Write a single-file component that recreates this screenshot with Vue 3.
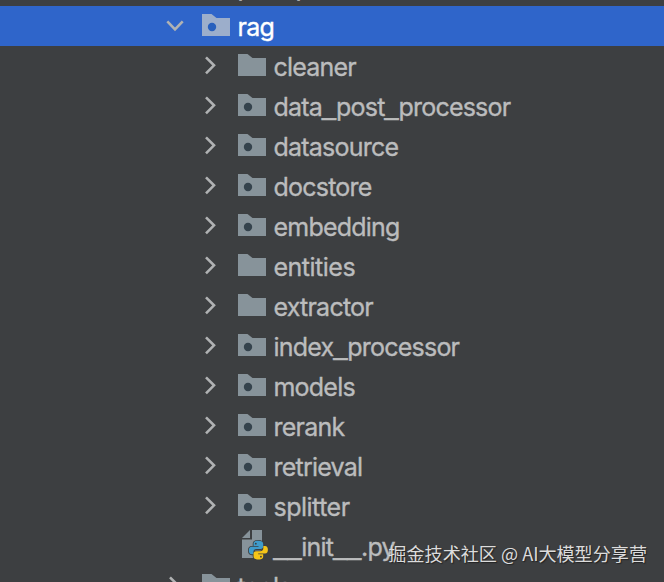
<template>
  <div class="project-panel">
    <ul class="tree">
      <li
        v-for="row in rows"
        :key="row.name"
        class="row"
        :class="['level-' + row.level, { selected: row.selected, loose: row.loose }]"
      >
        <!-- Arrow -->
        <span class="arrow">
          <svg v-if="row.open" class="chevron" viewBox="0 0 20 20">
            <path d="M2.3 5.4 L10 13.3 L17.7 5.4" />
          </svg>
          <svg v-else-if="row.type !== 'python'" class="chevron" viewBox="0 0 20 20">
            <path d="M5 1.3 L13 9.3 L5 17.3" />
          </svg>
        </span>

        <!-- Icon -->
        <svg v-if="row.type === 'python'" class="icon" viewBox="0 0 32 32">
          <path class="sheet" d="M14 0 H24 V28 H4 V9.5 H14 Z" />
          <path class="sheet" d="M4 8 L12 0 V8 Z" />
          <g transform="translate(10.4 10.2) scale(0.83)">
            <path class="outline" :d="snakeTop" />
            <path class="outline" :d="snakeTop" transform="rotate(180 12 12)" />
            <path class="snake-blue" :d="snakeTop" />
            <path class="snake-yellow" :d="snakeTop" transform="rotate(180 12 12)" />
            <circle class="eye" cx="8.9" cy="4.2" r="1.1" />
            <circle class="eye" cx="15.1" cy="19.8" r="1.1" />
          </g>
        </svg>
        <svg v-else class="icon" viewBox="0 0 32 32">
          <path class="folder" d="M0 4 H9.5 L14.5 8 H28 V26 H0 Z" />
          <circle v-if="row.type === 'package'" class="dot" cx="10" cy="17" r="4.2" />
        </svg>

        <span class="name">
          <span
            v-for="(part, index) in splitName(row.name)"
            :key="index"
            :class="{ underscore: part[0] === '_' }"
          >{{ part }}</span>
        </span>
      </li>
    </ul>
    <div class="watermark">掘金技术社区 @ AI大模型分享营</div>
  </div>
</template>

<script setup>
const snakeTop =
  'M11.8 0.8 C7.2 0.8 6.2 2.4 6.2 4.4 V7 H12.2 V8 H4 C1.5 8 0.5 10 0.5 12.5 C0.5 15.3 1.7 17 4 17 H6 V14.4 C6 12 7.7 10.7 9.9 10.7 H14.8 C16.7 10.7 17.8 9.2 17.8 7.6 V4.4 C17.8 2 15.7 0.8 11.8 0.8 Z'

const rows = [
  { name: 'prompt', level: 1, type: 'package' },
  { name: 'rag', level: 1, type: 'package', open: true, selected: true },
  { name: 'cleaner', level: 2, type: 'folder' },
  { name: 'data_post_processor', level: 2, type: 'package' },
  { name: 'datasource', level: 2, type: 'package' },
  { name: 'docstore', level: 2, type: 'package' },
  { name: 'embedding', level: 2, type: 'package' },
  { name: 'entities', level: 2, type: 'folder', loose: true },
  { name: 'extractor', level: 2, type: 'folder' },
  { name: 'index_processor', level: 2, type: 'package' },
  { name: 'models', level: 2, type: 'package' },
  { name: 'rerank', level: 2, type: 'package' },
  { name: 'retrieval', level: 2, type: 'package' },
  { name: 'splitter', level: 2, type: 'package', loose: true },
  { name: '__init__.py', level: 2, type: 'python' },
  { name: 'tools', level: 1, type: 'package' }
]

// underscores are wider than the letters, so they get their own span
const splitName = (name) => name.match(/_+|[^_]+/g)
</script>

<style>
body {
  background: #3d3f41;
}
</style>

<style scoped>
.project-panel {
  position: relative;
  height: 582px;
  overflow: hidden;
  background: #3d3f41;
  font-family: Inter, "Noto Sans CJK SC", sans-serif;
}

.tree {
  list-style: none;
  margin: -34px 0 0;
  padding: 0;
}

.row {
  display: flex;
  align-items: center;
  height: 40px;
  box-sizing: border-box;
  color: #bbbcbd;
}

.level-1 {
  padding-left: 165px;
}

.level-2 {
  padding-left: 201px;
}

.selected {
  background: #2f65ca;
  color: #fff;
}

.arrow {
  width: 20px;
  height: 20px;
  margin-right: 17px;
}

.chevron {
  display: block;
  width: 20px;
  height: 20px;
}

.chevron path {
  fill: none;
  stroke: #b0b2b3;
  stroke-width: 2.6;
}

.icon {
  flex: none;
  width: 32px;
  height: 32px;
  margin-right: 3.5px;
}

.folder,
.sheet {
  fill: #87939a;
}

.dot {
  fill: #35434d;
}

.selected .folder {
  fill: #9caecb;
}

.selected .dot {
  fill: #2860bd;
}

.outline {
  fill: #3d3f41;
  stroke: #3d3f41;
  stroke-width: 2;
}

.snake-blue {
  fill: #3f9bcb;
}

.snake-yellow {
  fill: #f5c518;
}

.eye {
  fill: #3d3f41;
}

.name {
  display: flex;
  align-items: baseline;
  font-size: 25px;
  line-height: 40px;
  letter-spacing: -0.78px;
  white-space: nowrap;
  position: relative;
  top: 1px;
  -webkit-text-stroke: 0.35px currentColor;
}

.loose .name {
  letter-spacing: -0.5px;
}

.underscore {
  position: relative;
  top: -1px;
  font-family: "Liberation Sans", sans-serif;
  letter-spacing: 0;
  -webkit-text-stroke: 0.6px currentColor;
}

.watermark {
  position: absolute;
  right: 17px;
  bottom: 15px;
  font-family: "Noto Sans CJK SC", sans-serif;
  font-size: 18.1px;
  line-height: 27px;
  color: #dcdcdc;
  text-shadow: 1px 1px 1px #222;
  white-space: nowrap;
}
</style>
